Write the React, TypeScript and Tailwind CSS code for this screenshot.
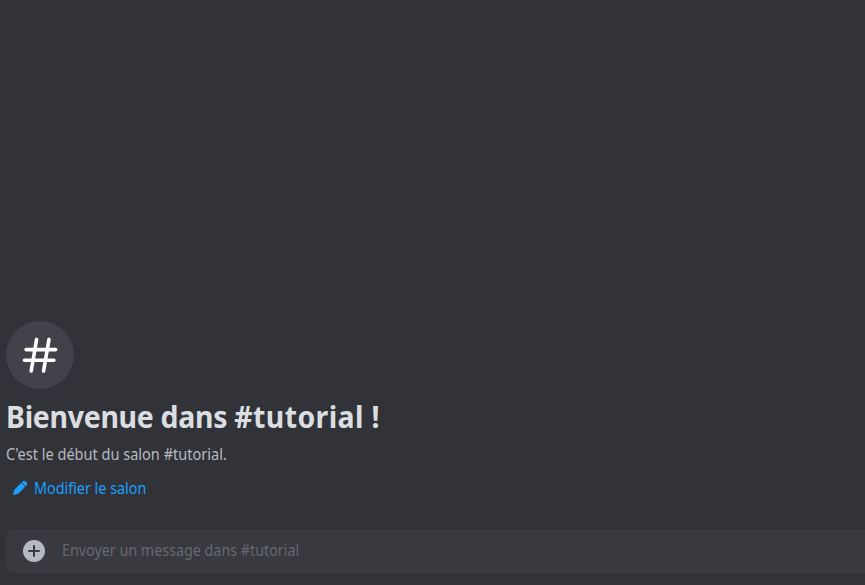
function HashIcon() {
  return (
    <svg width="68" height="68" viewBox="0 0 68 68" fill="none" stroke="#fff" strokeWidth="3.6" strokeLinecap="round">
      <path d="M30.6 18.4 25.2 50M43 18.4 37.6 50M20.1 28.6H49.7M18.4 39.3H47.9" />
    </svg>
  );
}

function PencilIcon() {
  return (
    <svg width="14" height="14" viewBox="0 0 14 14" fill="currentColor">
      <path d="M8.7 1.3 9.3.7a2.5 2.5 0 0 1 3.6 0l.4.4a2.5 2.5 0 0 1 0 3.6l-.6.6ZM8.3 1.7 12.3 5.7 6 12a2.5 2.5 0 0 1-1.1.7L1 13.9a.7.7 0 0 1-.9-.9L1.3 9.1A2.5 2.5 0 0 1 2 8Z" />
    </svg>
  );
}

function PlusIcon() {
  return (
    <svg width="22" height="22" viewBox="0 0 22 22">
      <circle cx="11" cy="11" r="11" fill="#b5bac1" />
      <path d="M11 6V16M6 11H16" stroke="#383a40" strokeWidth="2" strokeLinecap="round" />
    </svg>
  );
}

export default function App() {
  return (
    <main className="flex h-[585px] w-[865px] flex-col justify-end overflow-hidden bg-[#313338] pb-3 pl-1.5 font-['Noto_Sans',sans-serif]">
      <div className="h-[68px] w-[68px] rounded-full bg-[#42424a]">
        <HashIcon />
      </div>
      <h1 className="mt-[7px] h-10 origin-left scale-x-[0.918] whitespace-nowrap text-[31px] font-bold leading-10 text-[#dbdee1]">
        <span className="tracking-[-0.32px]">Bienvenue dans </span>
        <span className="tracking-[0.4px]">#tutorial !</span>
      </h1>
      <p className="mt-1.5 h-6 origin-left scale-x-[0.908] whitespace-nowrap text-base leading-6 text-[#b5bac1]">
        C'est le début du salon #tutorial.
      </p>
      <button className="mt-[10px] flex h-6 items-center gap-[7px] whitespace-nowrap pl-[7px] text-base leading-6 text-[#1a9fff]">
        <PencilIcon />
        <span className="origin-left scale-x-[0.897]">Modifier le salon</span>
      </button>
      <div className="mt-[29px] flex h-11 items-center gap-[17px] whitespace-nowrap rounded-l-lg bg-[#383a40] pl-[17px]">
        <PlusIcon />
        <span className="origin-left scale-x-[0.894] pb-0.5 text-base leading-6 text-[#66686e]">Envoyer un message dans #tutorial</span>
      </div>
    </main>
  );
}
